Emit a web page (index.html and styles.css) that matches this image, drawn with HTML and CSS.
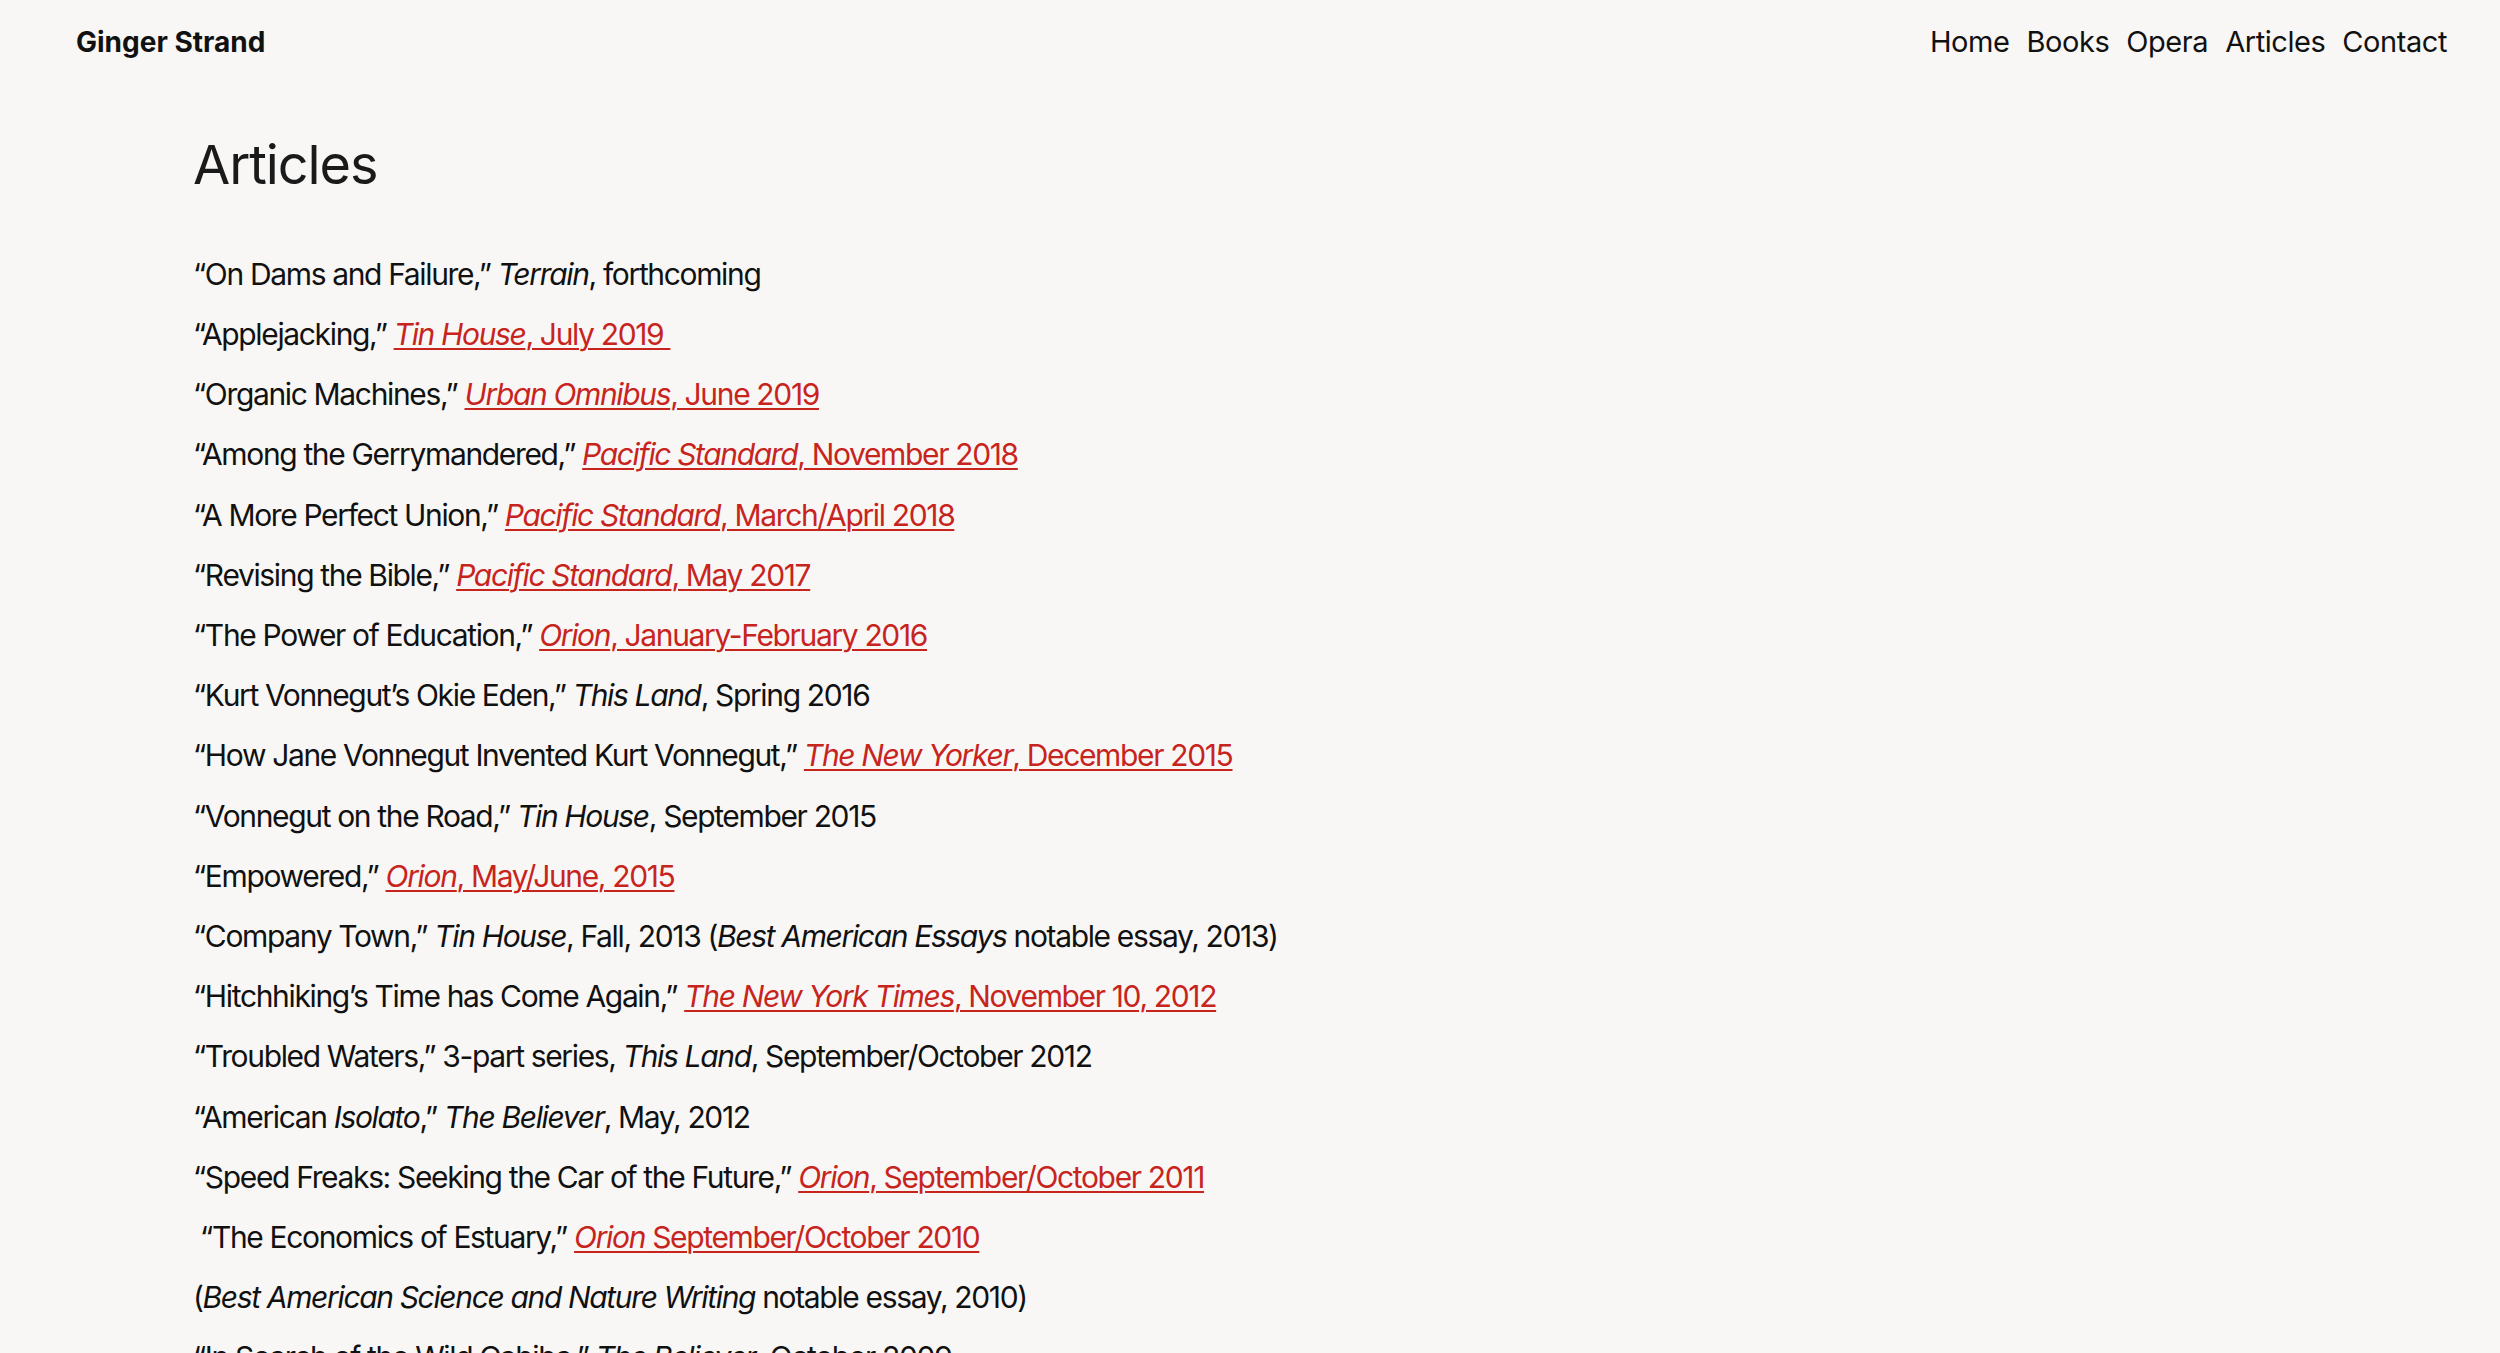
FILE: index.html
```html
<!DOCTYPE html>
<html lang="en">
<head>
    <meta charset="UTF-8">
    <meta name="viewport" content="width=device-width, initial-scale=1.0">
    <title>Articles — Ginger Strand</title>
    <link rel="stylesheet" href="styles.css">
</head>
<body>

<header class="site-header">
    <a class="site-title" href="#">Ginger Strand</a>
    <nav class="site-nav">
        <a href="#">Home</a>
        <a href="#">Books</a>
        <a href="#">Opera</a>
        <a href="#">Articles</a>
        <a href="#">Contact</a>
    </nav>
</header>

<main class="content">
    <h1>Articles</h1>

    <div class="article-list">
        <p>“On Dams and Failure,” <em>Terrain</em>, forthcoming</p>
        <p>“Applejacking,” <a href="#"><em>Tin House</em>, July 2019&nbsp;</a></p>
        <p>“Organic Machines,” <a href="#"><em>Urban Omnibus</em>, June 2019</a></p>
        <p>“Among the Gerrymandered,” <a href="#"><em>Pacific Standard</em>, November 2018</a></p>
        <p>“A More Perfect Union,” <a href="#"><em>Pacific Standard</em>, March/April 2018</a></p>
        <p>“Revising the Bible,” <a href="#"><em>Pacific Standard</em>, May 2017</a></p>
        <p>“The Power of Education,” <a href="#"><em>Orion</em>, January-February 2016</a></p>
        <p>“Kurt Vonnegut’s Okie Eden,” <em>This Land</em>, Spring 2016</p>
        <p>“How Jane Vonnegut Invented Kurt Vonnegut,” <a href="#"><em>The New Yorker</em>, December 2015</a></p>
        <p>“Vonnegut on the Road,” <em>Tin House</em>, September 2015</p>
        <p>“Empowered,” <a href="#"><em>Orion</em>, May/June, 2015</a></p>
        <p>“Company Town,” <em>Tin House</em>, Fall, 2013 (<em>Best American Essays</em> notable essay, 2013)</p>
        <p>“Hitchhiking’s Time has Come Again,” <a href="#"><em>The New York Times</em>, November 10, 2012</a></p>
        <p>“Troubled Waters,” 3-part series, <em>This Land</em>, September/October 2012</p>
        <p>“American <em>Isolato</em>,” <em>The Believer</em>, May, 2012</p>
        <p>“Speed Freaks: Seeking the Car of the Future,” <a href="#"><em>Orion</em>, September/October 2011</a></p>
        <p>&nbsp;“The Economics of Estuary,” <a href="#"><em>Orion</em> September/October 2010</a></p>
        <p>(<em>Best American Science and Nature Writing</em> notable essay, 2010)</p>
        <p>“In Search of the Wild Cabiba,” <em>The Believer</em>, October 2009</p>
        <p>“Dam Nation,” <em>Orion</em>, 2008</p>
    </div>
</main>

</body>
</html>
```

FILE: styles.css
```css
body {
    margin: 0;
    background-color: #f8f7f5;
    color: #111;
    font-family: Inter, "Noto Sans", sans-serif;
}
a {
    color: inherit;
    text-decoration: none;
}

/* header */
.site-header {
    display: flex;
    justify-content: space-between;
    align-items: flex-start;
    padding: 24px 53px 0 76px;
    line-height: 36px;
}
.site-title {
    font-size: 28px;
    font-weight: 700;
    letter-spacing: 0;
}
.site-nav {
    display: flex;
    gap: 17px;
    font-size: 29px;
    letter-spacing: -0.015em;
}

/* content */
.content {
    padding: 0 193px;
    margin-top: 73px;
}
h1 {
    font-size: 54px;
    font-weight: 400;
    line-height: 1.2;
    letter-spacing: -0.02em;
    color: #1a1a1a;
    margin: 0 0 46px;
}
.article-list p {
    margin: 0;
    font-size: 30px;
    line-height: 60.2px;
    letter-spacing: -0.045em;
}
.article-list a {
    color: #c8241e;
    text-decoration: underline;
    text-decoration-thickness: 2px;
    text-underline-offset: 3px;
}
```
